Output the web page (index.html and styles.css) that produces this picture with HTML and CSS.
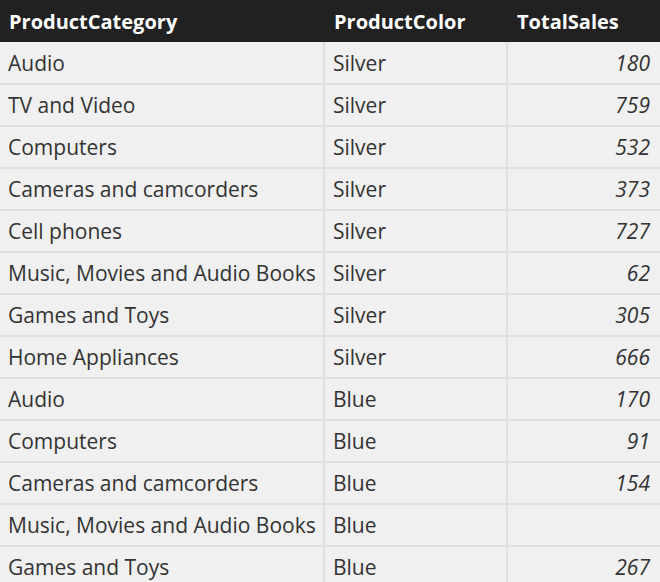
FILE: index.html
```html
<!DOCTYPE html>
<html>
<head>
<meta charset="utf-8">
<link rel="stylesheet" href="styles.css">
</head>
<body>
<table class="grid">
  <thead>
    <tr><th class="c1">ProductCategory</th><th class="c2">ProductColor</th><th class="c3">TotalSales</th></tr>
  </thead>
  <tbody>
    <tr><td>Audio</td><td>Silver</td><td class="num">180</td></tr>
    <tr><td>TV and Video</td><td>Silver</td><td class="num">759</td></tr>
    <tr><td>Computers</td><td>Silver</td><td class="num">532</td></tr>
    <tr><td>Cameras and camcorders</td><td>Silver</td><td class="num">373</td></tr>
    <tr><td>Cell phones</td><td>Silver</td><td class="num">727</td></tr>
    <tr><td>Music, Movies and Audio Books</td><td>Silver</td><td class="num">62</td></tr>
    <tr><td>Games and Toys</td><td>Silver</td><td class="num">305</td></tr>
    <tr><td>Home Appliances</td><td>Silver</td><td class="num">666</td></tr>
    <tr><td>Audio</td><td>Blue</td><td class="num">170</td></tr>
    <tr><td>Computers</td><td>Blue</td><td class="num">91</td></tr>
    <tr><td>Cameras and camcorders</td><td>Blue</td><td class="num">154</td></tr>
    <tr><td>Music, Movies and Audio Books</td><td>Blue</td><td class="num"></td></tr>
    <tr><td>Games and Toys</td><td>Blue</td><td class="num">267</td></tr>
  </tbody>
</table>
</body>
</html>
```

FILE: styles.css
```css
html, body {
  margin: 0;
  padding: 0;
  background: #f0f0f0;
  overflow: hidden;
}
.grid {
  width: 660px;
  border-collapse: collapse;
  table-layout: fixed;
  font-family: "Open Sans", "Noto Sans", sans-serif;
  font-size: 21px;
  color: #333;
}
.grid th {
  background: #212121;
  color: #fff;
  font-weight: 700;
  font-size: 20px;
  text-align: left;
  height: 42px;
  padding: 0 0 0 9px;
  box-sizing: border-box;
  vertical-align: middle;
  white-space: nowrap;
}
.grid th.c1 { width: 324px; }
.grid th.c2 { width: 183px; padding-left: 10px; }
.grid th.c3 { padding-left: 10px; }
.grid td {
  height: 42px;
  box-sizing: border-box;
  padding: 0 8px;
  border-bottom: 2px solid #e0e0e0;
  border-left: 2px solid #e0e0e0;
  vertical-align: middle;
  white-space: nowrap;
  background: #f0f0f0;
}
.grid td:first-child { border-left: none; }
.grid td.num {
  text-align: right;
  font-style: italic;
  padding-right: 10px;
}
```
